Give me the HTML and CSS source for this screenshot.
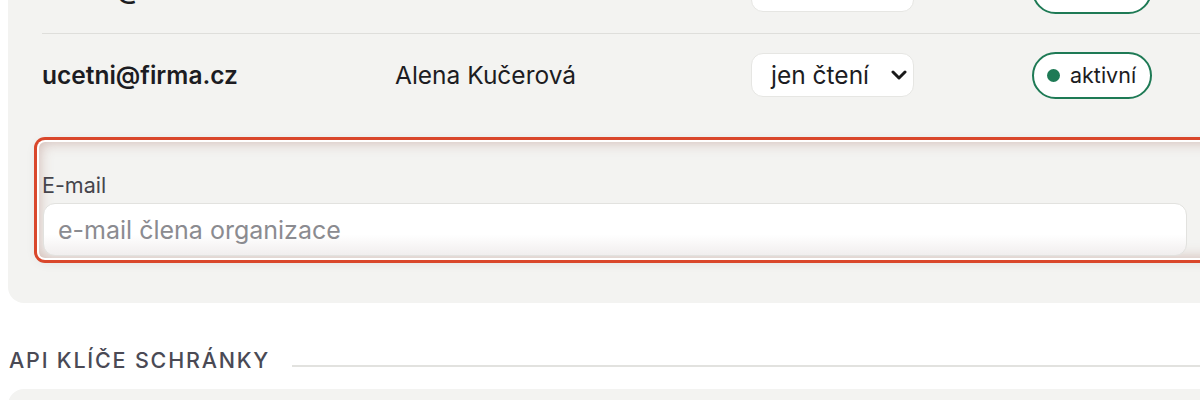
FILE: index.html
```html
<!DOCTYPE html>
<html lang="cs">
<head>
<meta charset="utf-8">
<title>Členové organizace</title>
<link rel="stylesheet" href="styles.css">
</head>
<body>
<div class="page">
  <section class="card">
    <div class="row">
      <div class="email">reditel@firma.cz</div>
      <div class="name">Jan Novák</div>
      <div class="cell"><div class="select"><span>vlastník</span><svg class="chev" viewBox="0 0 16 10" width="16" height="10"><path d="M2 2l6 6 6-6" fill="none" stroke="#1a1a1a" stroke-width="3" stroke-linecap="round" stroke-linejoin="round"/></svg></div></div>
      <div class="cell"><span class="badge"><span class="dot"></span>aktivní</span></div>
    </div>
    <div class="row row-last">
      <div class="email">ucetni@firma.cz</div>
      <div class="name">Alena Kučerová</div>
      <div class="cell"><div class="select"><span>jen čtení</span><svg class="chev" viewBox="0 0 16 10" width="16" height="10"><path d="M2 2l6 6 6-6" fill="none" stroke="#1a1a1a" stroke-width="3" stroke-linecap="round" stroke-linejoin="round"/></svg></div></div>
      <div class="cell"><span class="badge"><span class="dot"></span>aktivní</span></div>
    </div>
    <div class="field">
      <label class="label" for="member-email">E-mail</label>
      <input class="input" id="member-email" type="email" placeholder="e-mail člena organizace">
    </div>
  </section>
  <h2 class="section-title"><span>API KLÍČE SCHRÁNKY</span></h2>
  <section class="card card-next"></section>
</div>
</body>
</html>
```
FILE: styles.css
```css
* { box-sizing: border-box; }
html, body { margin: 0; padding: 0; background: #ffffff; overflow: hidden; }
body { font-family: Inter, "Noto Sans", sans-serif; color: #1c1c22; }
.page { width: 1300px; padding-left: 8px; }
.card {
  background: #f3f3f1;
  border-radius: 16px;
  margin-top: -71px;
  padding: 20px 34px 45px 34px;
}
.row {
  display: grid;
  grid-template-columns: 353px 356px 281px 200px;
  align-items: center;
  height: 85px;
  padding-bottom: 2px;
  border-bottom: 1px solid #dededb;
}
.row-last { border-bottom: none; height: 84px; }
.email { font-size: 24.5px; font-weight: 600; color: #1c1c22; }
.name { font-size: 24.5px; font-weight: 400; color: #1c1c22; }
.cell { display: flex; align-items: center; }
.select {
  width: 163px;
  height: 44px;
  background: #fff;
  border: 1px solid #e6e6e3;
  border-radius: 12px;
  display: flex;
  align-items: center;
  justify-content: space-between;
  padding: 0 6px 0 19px;
  font-size: 24.5px;
  color: #1c1c22;
}
.chev { display: block; }
.badge {
  display: inline-flex;
  align-items: center;
  gap: 10px;
  height: 47px;
  padding: 0 14px 0 13px;
  border: 2px solid #1e7a55;
  border-radius: 999px;
  background: #fff;
  font-size: 21.5px;
  color: #1c1c22;
}
.dot { width: 13px; height: 13px; border-radius: 50%; background: #1e7a55; }
.field {
  margin: 24px -40px 0 -3px;
  padding: 31px 0 2px 3px;
  border-radius: 6px;
  background: #f3f3f1;
  box-shadow: inset 0 0 14px rgba(140, 70, 55, 0.35), 0 0 0 2px #ffffff, 0 0 0 5px #d9472b, 0 2px 14px rgba(0, 0, 0, 0.12);
  display: flex;
  flex-direction: column;
}
.label { font-size: 21.5px; color: #45454c; line-height: 24px; margin-bottom: 6px; }
.input {
  margin-left: 1px;
  width: 1144px;
  height: 53px;
  border: 1px solid #e2e2df;
  border-radius: 12px;
  background: linear-gradient(#ffffff 60%, #f1eeee);
  padding: 0 14px;
  font-family: Inter, "Noto Sans", sans-serif;
  font-size: 25px;
  color: #1c1c22;
  outline: none;
}
.input::placeholder { color: #8b8b90; }
.section-title {
  display: flex;
  align-items: center;
  gap: 22px;
  margin: 44px 0 0 1px;
  font-size: 21.5px;
  font-weight: 500;
  letter-spacing: 1.8px;
  color: #4a4a55;
  height: 26px;
}
.section-title::after { content: ""; flex: 1; height: 2px; background: #e2e2df; margin-top: 12px; }
.card-next { margin-top: 16px; height: 60px; border-radius: 16px; padding: 0; }
```
